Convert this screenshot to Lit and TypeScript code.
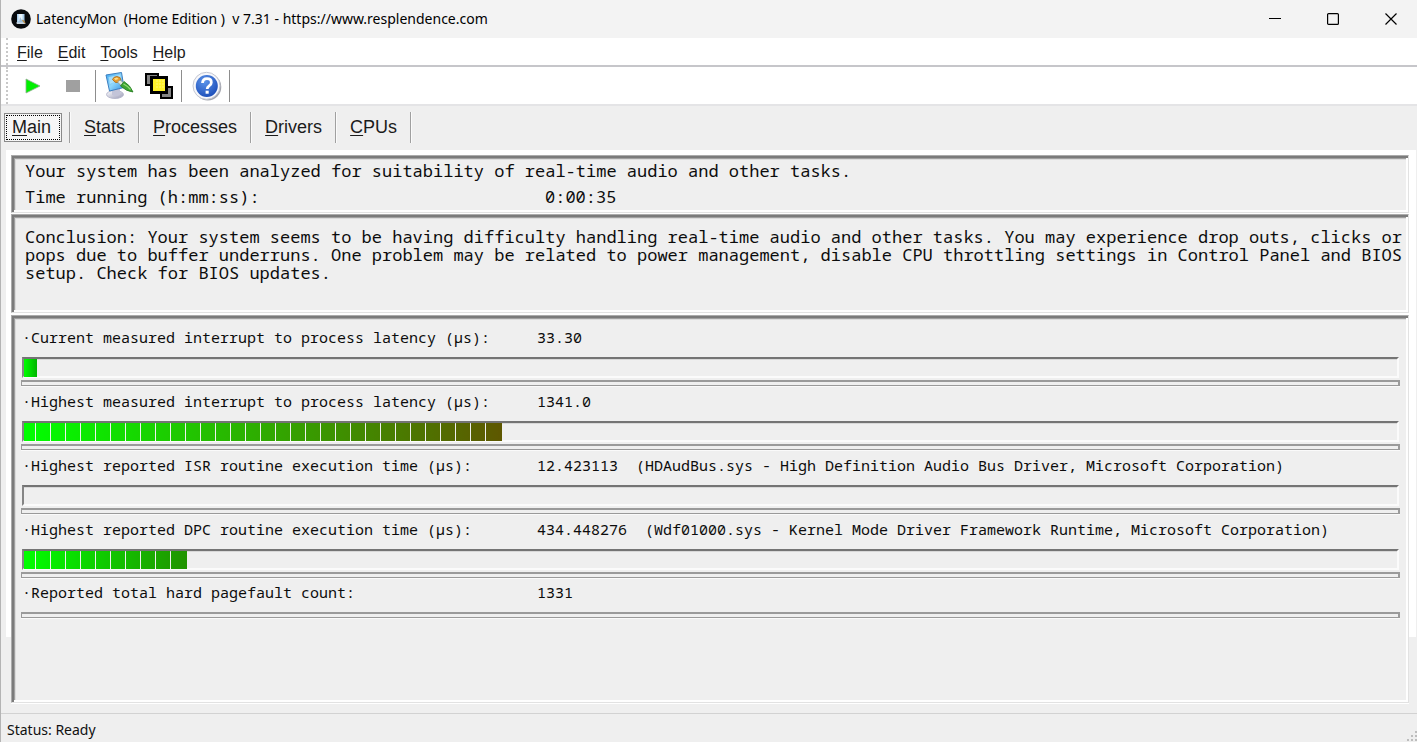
import { LitElement, html, css, svg } from "lit";
import { customElement, property, state } from "lit/decorators.js";

interface Reading {
  label: string;
  value: string;
  detail?: string;
  blocks?: number;
  endColor?: string;
}

const READINGS: Reading[] = [
  { label: "Current measured interrupt to process latency (µs):", value: "33.30", blocks: 1, endColor: "#00b400" },
  { label: "Highest measured interrupt to process latency (µs):", value: "1341.0", blocks: 32, endColor: "#5e5700" },
  {
    label: "Highest reported ISR routine execution time (µs):",
    value: "12.423113",
    detail: "(HDAudBus.sys - High Definition Audio Bus Driver, Microsoft Corporation)",
    blocks: 0,
  },
  {
    label: "Highest reported DPC routine execution time (µs):",
    value: "434.448276",
    detail: "(Wdf01000.sys - Kernel Mode Driver Framework Runtime, Microsoft Corporation)",
    blocks: 11,
    endColor: "#209300",
  },
  { label: "Reported total hard pagefault count:", value: "1331" },
];

const TABS = ["Main", "Stats", "Processes", "Drivers", "CPUs"];
const MENUS = ["File", "Edit", "Tools", "Help"];

const accel = (text: string) => html`<u>${text[0]}</u>${text.slice(1)}`;

/** Segmented level bar in a sunken frame. */
@customElement("level-bar")
export class LevelBar extends LitElement {
  @property({ type: Number }) blocks = 0;
  @property() endColor = "#00b400";

  static styles = css`
    :host {
      display: block;
    }
    .frame {
      box-sizing: border-box;
      height: 21px;
      margin: 0 1px;
      border: 2px solid;
      border-color: #747474 #fbfbfb #fbfbfb #858585;
      box-shadow: inset 0 1px #d8d8d8;
    }
    .fill {
      height: 18px;
      background: linear-gradient(90deg, #00ff00, var(--end));
      mask: repeating-linear-gradient(90deg, #000 0 14px, transparent 14px 15px);
      mask-position: -3px 0;
    }
  `;

  render() {
    const width = this.blocks ? this.blocks * 15 - 2 : 0;
    return html`<div class="frame" role="meter" aria-valuenow=${this.blocks} aria-valuemin="0" aria-valuemax="92">
      <div class="fill" style="width:${width}px;--end:${this.endColor}"></div>
    </div>`;
  }
}

@customElement("app-root")
export class AppRoot extends LitElement {
  @state() private active = "Main";

  static styles = css`
    :host {
      display: flex;
      flex-direction: column;
      box-sizing: border-box;
      min-height: 100vh;
      border-left: 1px solid #b4b4b4;
      background: #efefef;
      color: #1b1b1b;
      font-family: "Liberation Sans", Arial, sans-serif;
    }
    button {
      appearance: none;
      border: 0;
      margin: 0;
      padding: 0;
      background: none;
      color: inherit;
      font: inherit;
    }
    svg {
      display: block;
    }
    u {
      text-underline-offset: 2px;
      text-decoration-thickness: 1px;
    }

    .titlebar {
      display: flex;
      align-items: center;
      height: 38px;
      padding-left: 10px;
      background: #f3f3f3;
      color: #000;
    }
    .title {
      flex: 1;
      margin: 0 0 0 5px;
      font: 400 14px/20px "Noto Sans", "Open Sans", sans-serif;
      white-space: pre;
    }
    .window-buttons {
      display: flex;
      padding-right: 2px;
    }
    .window-buttons button {
      display: grid;
      place-items: center;
      width: 48px;
      height: 36px;
      margin-left: 10px;
    }

    .bars {
      padding-left: 5px;
      background: #fff;
      border-bottom: 2px solid #e4e4e6;
    }
    .menubar,
    .toolbar {
      display: flex;
      align-items: center;
      border-left: 2px dotted #c8c8c8;
    }
    .menubar {
      box-sizing: border-box;
      gap: 15px;
      height: 27px;
      padding: 2px 0 0 9px;
      font-size: 16px;
      line-height: 20px;
    }
    .rule {
      height: 2px;
      margin-left: -5px;
      background: #c6c6ca;
    }
    .toolbar {
      height: 37px;
    }
    .toolbar button {
      display: grid;
      place-items: center;
      width: 40px;
      height: 32px;
    }
    .divider {
      width: 1px;
      height: 32px;
      background: #8d8d8d;
    }
    .run {
      display: flex;
      padding: 0 2px 0 5px;
    }
    .tools {
      display: flex;
      padding: 0 2px 0 3px;
    }
    .help {
      display: flex;
      padding: 0 2px 0 5px;
    }

    .tabs {
      display: flex;
      align-items: center;
      box-sizing: border-box;
      height: 44px;
      padding: 0 0 2px 3px;
      font-size: 18px;
      line-height: 20px;
    }
    .tabs button {
      height: 31px;
      padding: 0 13px 0 14px;
      border-right: 1px solid #a0a0a0;
      box-shadow: 1px 0 #fbfbfb;
    }
    .tabs .selected {
      height: 29px;
      margin-right: 7px;
      padding: 0 10px 0 7px;
      border: 1px solid #8a8a8a;
      background: #f6f6f6;
      outline: 1px dotted #000;
      outline-offset: -3px;
      box-shadow: none;
    }
    .tabs .edge {
      width: 1px;
      height: 31px;
      background: #a0a0a0;
      box-shadow: 1px 0 #fbfbfb;
    }

    main {
      display: flex;
      flex: 1;
      flex-direction: column;
      margin: 0 1px 0 5px;
      padding: 5px 7px 10px 5px;
      background: linear-gradient(#fff, #fff) no-repeat 0 0 / 100% 487px;
      font-family: "Noto Sans Mono", "DejaVu Sans Mono", monospace;
      color: #0c0c0c;
    }
    .panel {
      border: 1px solid;
      border-color: #ababab #e2e2e2 #e2e2e2 #ababab;
      background: #efefef;
      box-shadow:
        inset 2px 2px #7b7b7b,
        inset -2px -2px #fefefe,
        inset 3px 3px #a0a0a0,
        inset 4px 4px #dcdcdc,
        0 1px #fff;
    }
    .summary {
      margin-bottom: 1px;
      padding: 2px 13px;
      font-size: 17px;
      line-height: 26px;
    }
    .panel p {
      margin: 0;
    }
    .elapsed {
      display: grid;
      grid-template-columns: 520px auto;
    }
    .conclusion {
      margin-bottom: 2px;
      padding: 13px 2px 30px 13px;
      font-size: 17px;
      line-height: 18px;
    }
    .readings {
      flex: 1;
      padding: 6px 8px 0 9px;
      font-size: 15px;
    }
    .reading {
      display: grid;
      grid-template-columns: 515px auto;
      align-items: center;
      box-sizing: border-box;
      height: 35px;
      padding: 0 0 5px 1px;
      line-height: 20px;
      white-space: pre;
    }
    .reading:last-of-type {
      height: 32px;
    }
    .groove {
      height: 3px;
      margin-top: 2px;
      border: 2px solid #9a9a9a;
      border-width: 2px 2px 1px 1px;
      box-shadow: 0 1px #fafafa;
    }
    .total {
      height: 32px;
    }

    .status {
      display: flex;
      justify-content: space-between;
      align-items: flex-end;
      height: 28px;
      padding-left: 6px;
      border-top: 1px solid #d2d2d2;
      color: #111;
      font: 14px/24px "Noto Sans", "Open Sans", sans-serif;
    }
    .status output {
      align-self: center;
      margin-top: 4px;
    }
  `;

  private appIcon() {
    return svg`<svg width="20" height="20" viewBox="0 0 20 20" aria-hidden="true">
      <circle cx="10" cy="10" r="9.8" fill="#080a0d"/>
      <path d="M6 5h7.500v9H6z" fill="#a9cdeb"/>
      <path d="M7.500 5h4v7h-4z" fill="#e9f5fc"/>
      <path d="M9 8l3 5H8z" fill="#9fc0dc"/>
      <path d="M5 13.500h8l2 1.500H6z" fill="#c9d3dc"/>
      <path d="M11.500 11l2.500 3" stroke="#b8863c" stroke-width="1.200"/>
    </svg>`;
  }

  private optionsIcon() {
    return svg`<svg width="30" height="30" viewBox="0 0 30 30" aria-hidden="true">
      <defs>
        <linearGradient id="screen" x1="0" y1="0" x2="1" y2="1">
          <stop offset="0" stop-color="#3ba6f2"/><stop offset=".5" stop-color="#8fd6fa"/><stop offset="1" stop-color="#2f8fe4"/>
        </linearGradient>
        <linearGradient id="base" x1="0" y1="0" x2="1" y2="1">
          <stop offset="0" stop-color="#fdfdff"/><stop offset="1" stop-color="#9c9db8"/>
        </linearGradient>
      </defs>
      <ellipse cx="11" cy="23.500" rx="8.500" ry="4" fill="url(#base)" stroke="#aeb0c6" stroke-width=".8"/>
      <path d="M8 17l8 1v6q-4 2-8 0z" fill="#c3c4d8"/>
      <path d="M2 4L17.500 1.500l2.500 15-14.500 3.500z" fill="url(#screen)" stroke="#3c7fc0" stroke-width="1"/>
      <path d="M4.500 6l11.500-2 .8 4-11 5z" fill="#c9effd" opacity=".6"/>
      <path d="M8.500 8.500q1-3 4.500-3l3 1 1 3-3 2q-3 1-5.500-3z" fill="#e79c2e" stroke="#a86512" stroke-width=".8"/>
      <path d="M10 7.500l3-1 1.500 1.500-3 1z" fill="#fbdc8a"/>
      <path d="M13.500 11l2.500-2 4 3-2.500 3z" fill="#e4e9e0" stroke="#8a9486" stroke-width=".7"/>
      <path d="M16.500 15l3.500-4.500q6.500 4 9 10.500-6.500-.5-12.500-6z" fill="#3fa535" stroke="#237a1e" stroke-width=".8"/>
      <path d="M19.500 13q4 2 7 5.500" fill="none" stroke="#92dc74" stroke-width="1.200"/>
    </svg>`;
  }

  private layersIcon() {
    const dots = [11.5, 14.5, 17.5].flatMap((x) => [8.5, 11.5, 14.5].map((y) => svg`<rect x=${x} y=${y} width="1" height="1" fill="#fffbd0"/>`));
    return svg`<svg width="28" height="28" viewBox="0 0 28 28" aria-hidden="true">
      <rect x="1" y="2" width="12" height="11" fill="#858585" stroke="#000" stroke-width="2"/>
      <rect x="16" y="15" width="11" height="11" fill="#858585" stroke="#000" stroke-width="2"/>
      <rect x="6.500" y="5.500" width="15" height="15" fill="#fff22a" stroke="#000" stroke-width="3"/>
      ${dots}
    </svg>`;
  }

  private helpIcon() {
    return svg`<svg width="30" height="30" viewBox="0 0 30 30" aria-hidden="true">
      <defs>
        <radialGradient id="ball" cx=".4" cy=".3" r=".8">
          <stop offset="0" stop-color="#5c94ea"/><stop offset="1" stop-color="#1647b4"/>
        </radialGradient>
      </defs>
      <circle cx="15.800" cy="16" r="13.500" fill="#a4a6ae"/>
      <circle cx="14.500" cy="14.800" r="13.500" fill="#f6f7fb" stroke="#c4c7d2" stroke-width="1"/>
      <circle cx="14.800" cy="15" r="11" fill="url(#ball)"/>
      <path d="M10.500 12q.3-4.300 4.500-4.300 4.300 0 4.300 3.700 0 2.100-2.200 3.500-1.900 1.300-1.900 3" fill="none" stroke="#fff" stroke-width="2.800"/>
      <rect x="13.600" y="19.700" width="3.100" height="3" fill="#fff"/>
    </svg>`;
  }

  private renderReading(r: Reading) {
    const hasBar = r.blocks !== undefined;
    return html`
      <div class="reading ${hasBar ? "" : "total"}"><span>·${r.label}</span><span>${r.value}${r.detail ? "  " + r.detail : ""}</span></div>
      ${hasBar ? html`<level-bar .blocks=${r.blocks} .endColor=${r.endColor ?? "#00b400"}></level-bar>` : ""}
      <div class="groove"></div>
    `;
  }

  render() {
    return html`
      <header class="titlebar">
        ${this.appIcon()}
        <h1 class="title">LatencyMon  (Home Edition )  v 7.31 - https://www.resplendence.com</h1>
        <div class="window-buttons">
          <button aria-label="Minimize"><svg width="12" height="12"><path d="M0 5.500h12" stroke="#000"/></svg></button>
          <button aria-label="Maximize"><svg width="12" height="12"><rect x=".6" y=".6" width="10.800" height="10.800" rx="1" fill="none" stroke="#000" stroke-width="1.200"/></svg></button>
          <button aria-label="Close"><svg width="12" height="12"><path d="M.5.5l11 11M11.500.5l-11 11" stroke="#000" stroke-width="1.200"/></svg></button>
        </div>
      </header>

      <div class="bars">
        <nav class="menubar">${MENUS.map((m) => html`<button>${accel(m)}</button>`)}</nav>
        <div class="rule"></div>
        <div class="toolbar">
          <div class="run">
            <button aria-label="Start"><svg width="16" height="16"><path d="M1 1v14l14-7z" fill="#00f000" stroke="#8fae8f" stroke-width=".8"/></svg></button>
            <button aria-label="Stop"><svg width="16" height="14"><rect x="1" y="1" width="14" height="12" fill="#a0a0a0"/></svg></button>
          </div>
          <div class="divider"></div>
          <div class="tools">
            <button aria-label="Options">${this.optionsIcon()}</button>
            <button aria-label="Windows">${this.layersIcon()}</button>
          </div>
          <div class="divider"></div>
          <div class="help"><button aria-label="Help">${this.helpIcon()}</button></div>
          <div class="divider"></div>
        </div>
      </div>

      <nav class="tabs" role="tablist">
        ${TABS.map(
          (t) => html`<button
              role="tab"
              aria-selected=${t === this.active}
              class=${t === this.active ? "selected" : ""}
              @click=${() => (this.active = t)}
            >${accel(t)}</button>${t === this.active ? html`<span class="edge"></span>` : ""}`
        )}
      </nav>

      <main>
        <section class="panel summary">
          <p>Your system has been analyzed for suitability of real-time audio and other tasks.</p>
          <p class="elapsed"><span>Time running (h:mm:ss):</span><span>0:00:35</span></p>
        </section>
        <section class="panel conclusion">
          <p>Conclusion: Your system seems to be having difficulty handling real-time audio and other tasks. You may experience drop outs, clicks or pops due to buffer underruns. One problem may be related to power management, disable CPU throttling settings in Control Panel and BIOS setup. Check for BIOS updates.</p>
        </section>
        <section class="panel readings">${READINGS.map((r) => this.renderReading(r))}</section>
      </main>

      <footer class="status">
        <output>Status: Ready</output>
        <svg width="10" height="12" aria-hidden="true">
          <path d="M8 1h2v2H8zM4 5h2v2H4zM8 5h2v2H8zM0 9h2v2H0zM4 9h2v2H4zM8 9h2v2H8z" fill="#bdbdbd"/>
        </svg>
      </footer>
    `;
  }
}
